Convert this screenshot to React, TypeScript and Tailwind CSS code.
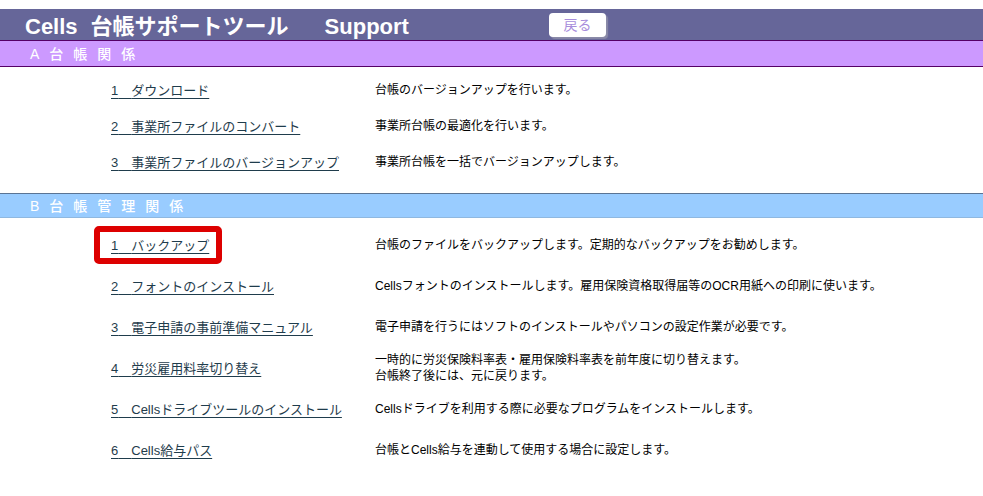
import React from 'react';

type Item = { no: string; label: string; desc: string[]; mark?: boolean };

const SECTION_A: Item[] = [
  { no: '1', label: 'ダウンロード', desc: ['台帳のバージョンアップを行います。'] },
  { no: '2', label: '事業所ファイルのコンバート', desc: ['事業所台帳の最適化を行います。'] },
  { no: '3', label: '事業所ファイルのバージョンアップ', desc: ['事業所台帳を一括でバージョンアップします。'] },
];

const SECTION_B: Item[] = [
  {
    no: '1',
    label: 'バックアップ',
    desc: ['台帳のファイルをバックアップします。定期的なバックアップをお勧めします。'],
    mark: true,
  },
  {
    no: '2',
    label: 'フォントのインストール',
    desc: ['Cellsフォントのインストールします。雇用保険資格取得届等のOCR用紙への印刷に使います。'],
  },
  {
    no: '3',
    label: '電子申請の事前準備マニュアル',
    desc: ['電子申請を行うにはソフトのインストールやパソコンの設定作業が必要です。'],
  },
  {
    no: '4',
    label: '労災雇用料率切り替え',
    desc: ['一時的に労災保険料率表・雇用保険料率表を前年度に切り替えます。', '台帳終了後には、元に戻ります。'],
  },
  {
    no: '5',
    label: 'Cellsドライブツールのインストール',
    desc: ['Cellsドライブを利用する際に必要なプログラムをインストールします。'],
  },
  { no: '6', label: 'Cells給与パス', desc: ['台帳とCells給与を連動して使用する場合に設定します。'] },
];

function Row({ item, h }: { item: Item; h: string }) {
  return (
    <div className={`grid grid-cols-[264px_1fr] items-center pl-[111px] ${h}`}>
      <div>
        <span className="relative inline-block">
          {item.mark && (
            <span className="absolute left-[-17px] top-1/2 h-[38px] w-[128px] -translate-y-1/2 rounded-[5px] border-[6px] border-[#dd0000]" />
          )}
          <a href="#" className="relative text-[13px] leading-4 text-[#1f3c4c] underline underline-offset-[3px]">
            {item.no}
            {'\u3000'}
            {item.label}
          </a>
        </span>
      </div>
      <div className="text-[12px] leading-4 text-black">
        {item.desc.map((d) => (
          <p key={d}>{d}</p>
        ))}
      </div>
    </div>
  );
}

export default function App() {
  return (
    <div className="min-h-[496px] w-full bg-white pt-[9px] font-['Liberation_Sans','Noto_Sans_CJK_JP',sans-serif]">
      <div className="flex h-[31px] items-center bg-[#666699] pl-[25px] text-white">
        <span className="pt-[4px] text-[22px] font-bold leading-none">Cells</span>
        <span className="ml-[13px] pt-[4px] text-[22px] font-bold leading-none">台帳サポートツール</span>
        <span className="ml-[36px] pt-[4px] text-[22px] font-bold leading-none">Support</span>
        <button className="ml-[140px] h-[24px] w-[57px] rounded-[4px] bg-white text-[14px] leading-none text-[#a88ddc] shadow-[2px_2px_1px_#8a8aa8]">
          戻る
        </button>
      </div>

      <div className="flex h-[27px] items-center border-y border-[#550066] bg-[#cc99ff] pl-[30px] text-[14px] font-medium leading-none tracking-[10px] text-white">
        A台帳関係
      </div>

      <div className="pt-[5px]">
        {SECTION_A.map((it) => (
          <Row key={it.no} item={it} h="h-[36px]" />
        ))}
      </div>

      <div className="mt-[13px] flex h-[25px] items-center border-t border-[#5a7494] border-b border-b-[#8fb8e0] bg-[#99ccff] pl-[30px] text-[14px] font-medium leading-none tracking-[10px] text-white">
        B台帳管理関係
      </div>

      <div className="pt-[7px]">
        {SECTION_B.map((it, i) => (
          <Row key={it.no} item={it} h={i === 0 ? 'h-[40px]' : 'h-[41px]'} />
        ))}
      </div>
    </div>
  );
}
